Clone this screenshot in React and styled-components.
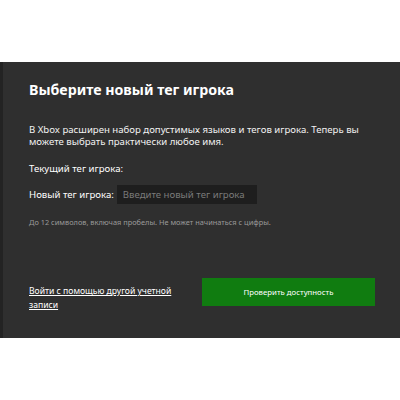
import styled, { createGlobalStyle } from "styled-components";

const GlobalStyle = createGlobalStyle`
  body {
    margin: 0;
    background: #ffffff;
    font-family: "Noto Sans", "Open Sans", sans-serif;
  }
`;

const Page = styled.div`
  width: 400px;
  height: 400px;
  padding-top: 62px;
  box-sizing: border-box;
`;

const Panel = styled.div`
  height: 276px;
  background: #2f2f2f;
  border-left: 3px solid #232323;
  box-sizing: border-box;
  padding: 17px 25px 0 26px;
  display: flex;
  flex-direction: column;
  color: #ffffff;
`;

const Title = styled.h1`
  margin: 0;
  font-size: 14.2px;
  line-height: 22px;
  font-weight: 700;
`;

const Text = styled.p`
  margin: 23px 0 0;
  font-size: 9.6px;
  line-height: 12px;
  color: #f2f2f2;
`;

const Label = styled.div`
  margin-top: ${(props) => (props.$inline ? "0" : "15px")};
  font-size: 9.6px;
  line-height: 12px;
`;

const Field = styled.div`
  display: flex;
  align-items: center;
  gap: 3px;
  margin-top: 10px;
`;

const Input = styled.input`
  width: 140px;
  height: 19px;
  box-sizing: border-box;
  border: none;
  outline: none;
  background: #1e1e1e;
  color: #fff;
  font-family: inherit;
  font-size: 9.6px;
  padding: 0 6px;

  &::placeholder {
    color: #7a7a7a;
  }
`;

const Hint = styled.div`
  margin-top: 13px;
  font-size: 7.4px;
  color: #9a9a9a;
`;

const Footer = styled.div`
  margin-top: auto;
  margin-bottom: 26px;
  display: flex;
  align-items: flex-start;
  justify-content: space-between;
`;

const Link = styled.a`
  margin-top: 6px;
  font-size: 8.6px;
  line-height: 14px;
  color: #ffffff;
  text-decoration: underline;
  cursor: pointer;
`;

const Button = styled.button`
  width: 173px;
  height: 28px;
  border: none;
  background: #107c10;
  color: #ffffff;
  font-family: inherit;
  font-size: 7.8px;
  cursor: pointer;
`;

export default function App() {
  return (
    <Page>
      <GlobalStyle />
      <Panel>
        <Title>Выберите новый тег игрока</Title>
        <Text>
          В Xbox расширен набор допустимых языков и тегов игрока. Теперь вы
          <br />
          можете выбрать практически любое имя.
        </Text>
        <Label>Текущий тег игрока:</Label>
        <Field>
          <Label as="label" $inline>Новый тег игрока:</Label>
          <Input placeholder="Введите новый тег игрока" />
        </Field>
        <Hint>До 12 символов, включая пробелы. Не может начинаться с цифры.</Hint>
        <Footer>
          <Link>
            Войти с помощью другой учетной
            <br />
            записи
          </Link>
          <Button>Проверить доступность</Button>
        </Footer>
      </Panel>
    </Page>
  );
}
